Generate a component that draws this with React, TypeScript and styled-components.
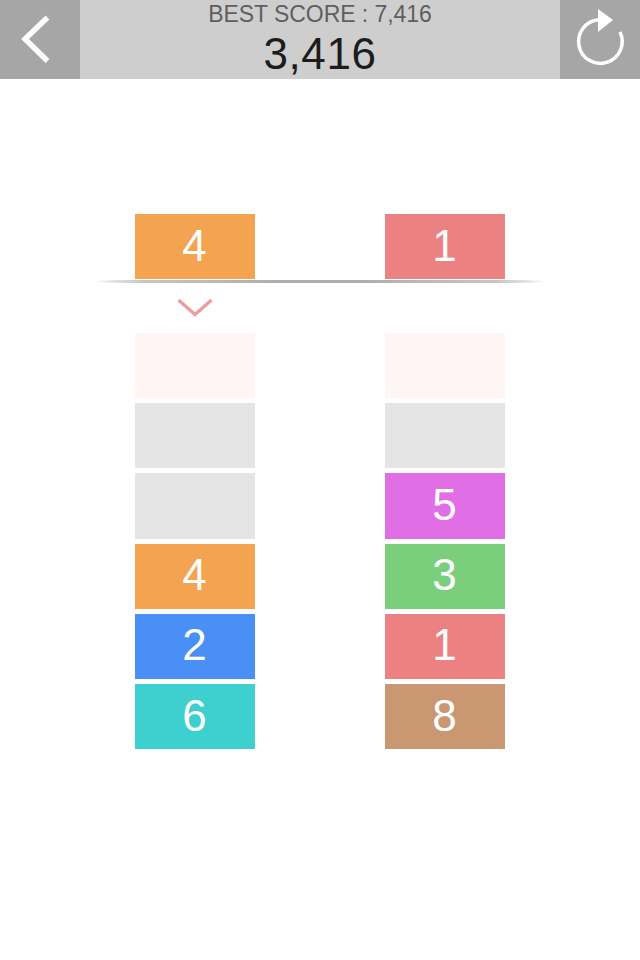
import React from "react";
import styled, { createGlobalStyle } from "styled-components";

const Global = createGlobalStyle`
  html, body { margin: 0; padding: 0; background: #fff; }
  body { font-family: "Liberation Sans", Arial, sans-serif; }
`;

const Page = styled.div`
  width: 640px;
  height: 960px;
  overflow: hidden;
  background: #fff;
`;

const Header = styled.header`
  display: flex;
  height: 79px;
  background: #cecece;
`;

const SideButton = styled.button`
  width: 80px;
  height: 79px;
  padding: 0;
  border: 0;
  background: #a6a6a6;
  display: flex;
  align-items: center;
  justify-content: center;
`;

const ScoreBox = styled.div`
  flex: 1;
  display: flex;
  flex-direction: column;
  align-items: center;
`;

const BestScore = styled.div`
  font-size: 23px;
  line-height: 28px;
  letter-spacing: -0.06px;
  color: #5f5f5f;
`;

const Score = styled.div`
  font-size: 44px;
  line-height: 50px;
  margin-top: 1px;
  letter-spacing: 0.6px;
  color: #1c1c1c;
`;

const Board = styled.main`
  padding-top: 135px;
  display: flex;
  flex-direction: column;
  align-items: center;
`;

const Columns = styled.div`
  display: grid;
  grid-template-columns: 120px 120px;
  column-gap: 130px;
`;

const Tile = styled.div<{ $bg: string }>`
  height: 65.2px;
  box-sizing: border-box;
  padding: 0 1px 2px 0;
  background: ${(p) => p.$bg};
  color: #fff;
  font-size: 44px;
  display: flex;
  align-items: center;
  justify-content: center;
`;

const Divider = styled.div`
  width: 444px;
  height: 3px;
  margin-top: 1px;
  border-radius: 24px / 1.5px;
  background: linear-gradient(90deg, rgba(176,176,176,0.15) 0%, #c6c6c6 10%, #aeaeae 40%, #aeaeae 60%, #c6c6c6 90%, rgba(176,176,176,0.15) 100%);
`;

const IndicatorRow = styled.div`
  height: 49.8px;
  display: flex;
  align-items: flex-start;
  padding-top: 15px;
  box-sizing: border-box;
`;

const IndicatorCell = styled.div`
  display: flex;
  justify-content: center;
`;

const Stack = styled.div`
  display: flex;
  flex-direction: column;
  gap: 5px;
`;

const ORANGE = "#f4a351";
const RED = "#ec8181";
const EMPTY = "#e5e5e5";
const FADE = "#fff5f4";

const left = [
  { bg: FADE }, { bg: EMPTY }, { bg: EMPTY },
  { bg: ORANGE, n: 4 }, { bg: "#4a8ff5", n: 2 }, { bg: "#3ecfcf", n: 6 },
];
const right = [
  { bg: FADE }, { bg: EMPTY }, { bg: "#e06fe6", n: 5 },
  { bg: "#7bce7b", n: 3 }, { bg: RED, n: 1 }, { bg: "#c99872", n: 8 },
];

const renderStack = (items: { bg: string; n?: number }[]) => (
  <Stack>
    {items.map((t, i) => (
      <Tile key={i} $bg={t.bg}>{t.n}</Tile>
    ))}
  </Stack>
);

export default function App() {
  return (
    <Page>
      <Global />
      <Header>
        <SideButton aria-label="Back">
          <svg width="80" height="79" viewBox="0 0 80 79">
            <path d="M47.5 17.5 L25 39 L47.5 61" fill="none" stroke="#fff" strokeWidth="5.5" />
          </svg>
        </SideButton>
        <ScoreBox>
          <BestScore>BEST SCORE : 7,416</BestScore>
          <Score>3,416</Score>
        </ScoreBox>
        <SideButton aria-label="Restart">
          <svg width="80" height="79" viewBox="0 0 80 79">
            <path d="M38.5 19.8 A21.8 21.8 0 1 0 60 32" fill="none" stroke="#fff" strokeWidth="3.5" />
            <path d="M38 9 L53 20 L38 32 Z" fill="#fff" />
          </svg>
        </SideButton>
      </Header>
      <Board>
        <Columns>
          <Tile $bg={ORANGE}>4</Tile>
          <Tile $bg={RED}>1</Tile>
        </Columns>
        <Divider />
        <IndicatorRow>
          <Columns>
            <IndicatorCell>
              <svg width="36" height="22" viewBox="0 0 36 22">
                <path d="M1.5 2 L18 16.5 L34.5 2" fill="none" stroke="#ee9c9c" strokeWidth="3.4" />
              </svg>
            </IndicatorCell>
            <IndicatorCell />
          </Columns>
        </IndicatorRow>
        <Columns>
          {renderStack(left)}
          {renderStack(right)}
        </Columns>
      </Board>
    </Page>
  );
}
